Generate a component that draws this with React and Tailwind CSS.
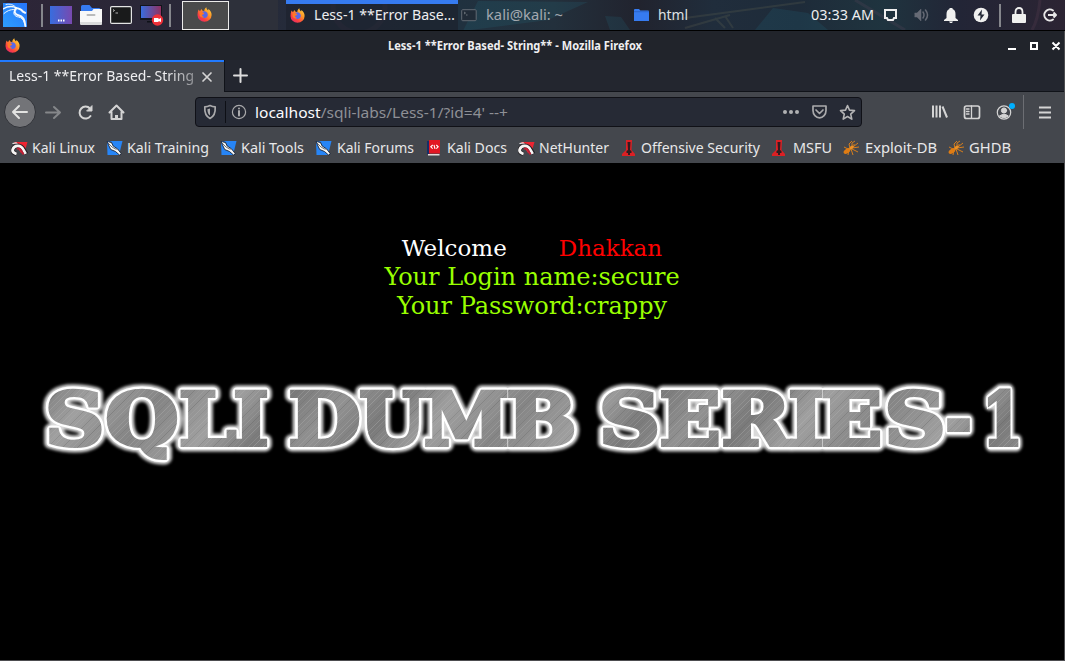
import React from "react";

const Sep = ({ className = "" }) => <div className={"w-[2px] h-[23px] bg-[#85868c] shrink-0 " + className} />;

function At({ w, children, className = "" }) {
  return <div className={"shrink-0 flex items-center whitespace-nowrap " + className} style={{ width: w }}>{children}</div>;
}

function Txt({ w, size = 15, y = 17, children, color = "#eeeef0", bold = false, host }) {
  return (
    <svg width={w} height="24" className="shrink-0 overflow-visible" fontFamily="'Noto Sans','Open Sans',sans-serif" fontSize={size} fontWeight={bold ? 700 : 400} fill={color}>
      <text x="0" y={y} textLength={w} lengthAdjust="spacingAndGlyphs">
        {host && <tspan fill="#fbfbfe">{host}</tspan>}{children}
      </text>
    </svg>
  );
}

const Firefox = () => (
  <svg width="15" height="15" viewBox="0 0 15 15" className="shrink-0">
    <defs>
      <linearGradient id="fx" x1="1" y1="0" x2="0.2" y2="1">
        <stop offset="0" stopColor="#ffe04a" /><stop offset=".4" stopColor="#ff9a26" /><stop offset=".75" stopColor="#fb4141" /><stop offset="1" stopColor="#e42a67" />
      </linearGradient>
    </defs>
    <path d="M1.5 2.5 3 4.2 4.3 2 5.6 3.8 7.3 3.9C7.2 2.5 8 1 9.4.2c-.1 1.4.7 2.2 1.7 3.2l.3-1.3C13.500 3.600 14.700 5.700 14.600 8a7 6.800 0 0 1-14.100 0C.5 6 .8 4.300 1.500 2.500Z" fill="url(#fx)" />
    <path d="M4.500 6.500c0-1.500 1.500-2.600 3.400-2.300C9.600 4.400 11 6 10.800 8c-.2 2-2 3.200-3.700 2.900-1.500-.2-2.600-1.500-2.700-3l2-.6.9-1Z" fill="#5868e8" />
    <path d="M2.500 5.600c1.500-1 3.100-.6 4.700.6-.7 1-1.500 1-2.300 1.400.1 1.500 1 2.200 2.500 2.500-1.300.9-3.800.5-4.800-1.300Z" fill="#ff7826" />
  </svg>
);

const KaliLogo = () => (
  <svg width="24" height="24" viewBox="0 0 24 24" className="shrink-0">
    <defs><linearGradient id="kl" x1="0" y1="1" x2="1" y2="0"><stop offset="0" stopColor="#2e9dff" /><stop offset="1" stopColor="#2675fb" /></linearGradient></defs>
    <path d="M0 0h24v24H0z" fill="url(#kl)" />
    <g fill="none" stroke="#f5faff" strokeLinecap="round">
      <path d="M0 6C5 3 9 2.500 13.500 5" strokeWidth="1.300" />
      <path d="M3 1.500c4-1 8 .2 10.500 3.500" strokeWidth=".9" />
      <path d="M1 10.500c4-3.500 8-4.500 12-3.700" strokeWidth="1" />
      <path d="M12.500 5c3 .2 5.600 1 7.200 3.500l2.500 1.300" strokeWidth="2" />
      <path d="M13 5.500c-2.500 2.600-1.300 6 2.300 6.700 4.500.8 6.700 4.200 7 10.800" strokeWidth="1.900" />
      <path d="M11.500 7.500c-2 3.500.5 6 4 6.500 3 .5 5 2.500 6 6" strokeWidth="1" />
    </g>
  </svg>
);

const Folder = ({ small }) => small ? (
  <svg width="15" height="12" viewBox="0 0 15 12"><path d="M0 1q0-1 1-1h4l1.300 1.500H14q1 0 1 1V12H0z" fill="#367bf0" /><path d="M0 2.700h15" stroke="#285db8" strokeWidth=".7" /></svg>
) : (
  <svg width="22" height="20" viewBox="0 0 22 20"><path d="M1 7V1.500Q1 0 2.500 0h7L12 3h7q1.500 0 1.500 1.500V9H1z" fill="#367bf0" /><path d="M0 6h12l1.500-2H22v14q0 2-1.500 2h-19Q0 20 0 18z" fill="#f8f8f8" /><path d="M0 17h22v1.500Q22 20 20.500 20h-19Q0 20 0 18z" fill="#dadbdc" /><rect x="6.500" y="9" width="9" height="2" rx="1" fill="#b9babb" /></svg>
);

const Desktop = ({ rec }) => (
  <svg width="24" height="22" viewBox="0 0 24 22">
    <defs><linearGradient id={rec ? "dg2" : "dg1"}><stop offset="0" stopColor="#386dde" /><stop offset="1" stopColor={rec ? "#92305f" : "#7849af"} /></linearGradient></defs>
    {rec ? <>
      <path d="M0 1h22v15H0z" fill="#12151c" /><path d="M1 2h20v12H1z" fill="url(#dg2)" /><path d="M7 17h8v1.500H7z" fill="#0e1118" />
      <circle cx="17.500" cy="16" r="5.700" fill="#ef3038" /><path d="M14 14h4.500v1.300l2.500-1.200v4l-2.500-1.200V18H14z" fill="#fff" />
    </> : <>
      <path d="M0 2h22v18H0z" fill="url(#dg1)" /><path d="M8 16.500h1.500M10.500 16.500H12M13 16.500h1.500" stroke="#fff" strokeWidth="2" />
    </>}
  </svg>
);

const Terminal = ({ small }) => small ? (
  <svg width="16" height="13" viewBox="0 0 16 13"><rect x=".7" y=".7" width="14.500" height="11" rx="1" fill="#202b37" stroke="#626a73" /><path d="m3 3 1.500 1L3 5M5 6h1.500" fill="none" stroke="#7e858b" strokeWidth=".8" /></svg>
) : (
  <svg width="22" height="18" viewBox="0 0 22 18"><rect x=".6" y=".6" width="20.800" height="16.800" rx="1.200" fill="#191a1b" stroke="#e3e4e4" strokeWidth="1.200" /><path d="m3 3.500 1.500 1L3 5.500M5.500 7H8" fill="none" stroke="#ddd" strokeWidth=".8" /></svg>
);

const Svg = ({ w = 16, h = w, children, color = "#d4d4d4", sw = 2 }) => (
  <svg width={w} height={h} viewBox={`0 0 ${w} ${h}`} fill="none" stroke={color} strokeWidth={sw} strokeLinecap="round" strokeLinejoin="round" className="shrink-0">{children}</svg>
);

function Panel() {
  return (
    <div className="h-[31px] relative flex items-center border-b border-black bg-[linear-gradient(90deg,#2d2537_0%,#292838_20%,#252b3a_27%,#20313f_43%,#23303c_52%,#21232e_60%,#202d3c_67%,#1e2b39_75%,#1f343f_83%,#222536_90%,#2c2433_100%)]">
      <div className="absolute inset-0 opacity-15 pointer-events-none">
        <svg width="1065" height="30" fill="none">
          <path d="M0 0h7L0 7z" fill="#3c8990" /><circle cx="359" cy="7" r="26" stroke="#964c75" strokeWidth="5" />
          <path d="m463 31 15-30 110 1-40 18zM605 16l16 1 9 13h-20zM755 30l18-22 35 5 20 17z" fill="#248096" />
          <path d="m685 28 45-13M715 18l10 10M725 16l8 12M670 20l135-18" stroke="#8f8961" strokeWidth="2" />
          <path d="m855 0 50 30M1040 0q-2 20-8 30" stroke="#80536d" strokeWidth="3" />
        </svg>
      </div>
      <div className="relative flex items-center h-[30px] w-full">
        <At w={41} className="pl-[3px]"><KaliLogo /></At>
        <At w={9}><Sep /></At>
        <At w={30}><Desktop /></At>
        <At w={30}><Folder /></At>
        <At w={30}><Terminal /></At>
        <At w={29}><Desktop rec /></At>
        <At w={13}><Sep /></At>
        <div className="w-[47px] h-[29px] mt-px shrink-0 border border-[#ecebea] bg-[#4a4a4b] flex items-center justify-center pr-[2px] pb-[2px]"><Firefox /></div>
        <div className="w-[49px] h-full bg-[#2d303a] shrink-0" />
        <div className="w-[180px] h-full pl-2 shrink-0">
          <div className="h-full border-t-4 border-[#367bf0] bg-[#1d222e]/70 flex items-center pl-1 pb-1"><At w={24}><Firefox /></At><Txt w={141}>Less-1 **Error Base…</Txt></div>
        </div>
        <At w={28} className="pl-[3px]"><Terminal small /></At>
        <At w={148}><Txt w={77} color="#a4a9b0">kali@kali: ~</Txt></At>
        <At w={24}><Folder small /></At>
        <At w={153}><Txt w={30} color="#dfe1e4">html</Txt></At>
        <At w={72}><Txt w={63}>03:33 AM</Txt></At>
        <At w={31}><Svg w={15} h={14}><path d="M2 2h11v8h-2l-1 2H5l-1-2H2z" strokeLinejoin="miter" stroke="#efefef" /></Svg></At>
        <At w={30}><Svg w={16} color="#666a75" sw={1.500}><path d="M1 6h2l4-4v12l-4-4H1z" fill="#666a75" strokeWidth=".5" /><path d="M9 5q2 3 0 6M11.500 3q4 5 0 10" /></Svg></At>
        <At w={29}><svg width="14" height="16" viewBox="0 0 14 16" fill="#f0f0ef"><path d="M5.500 2V1h3v1Q11.500 3 11.500 7v4L14 13v1H0v-1l2.500-2V7q0-4 3-5M5 14.500h4L8 16H6z" /></svg></At>
        <At w={26}><svg width="16" height="16"><circle cx="8" cy="8" r="7.300" fill="#f0f0ef" /><path d="M9 2.500 4.500 8.500h3L7 13.500l4.500-6h-3z" fill="#252a38" /></svg></At>
        <At w={13}><Sep /></At>
        <At w={30}><svg width="14" height="16"><path d="M1 7h12q1 0 1 1v7q0 1-1 1H1q-1 0-1-1V8q0-1 1-1" fill="#f0f0ef" /><path d="M3.500 7V5q0-4 3.500-4t3.500 4v2" fill="none" stroke="#f0f0ef" strokeWidth="1.800" /></svg></At>
        <Svg w={16}><path d="M11 3.500A5.500 5.500 0 1 0 11 12.500" stroke="#e8e8e8" /><path d="M6 8h8M11.500 5.500 14 8l-2.500 2.500" stroke="#e8e8e8" strokeLinecap="butt" /></Svg>
      </div>
    </div>
  );
}

const Dragon = ({ red }) => red ? (
  <svg width="17" height="16" viewBox="0 0 17 16">
    <path d="M3 2h13.500l-3.500 12-3-1z" fill="#ee2532" />
    <path d="M1.500 3.500 5 3l2 1.500" fill="none" stroke="#f4f4f4" strokeWidth="1.200" />
    <path d="M5.500 14Q.8 12.500 1.500 9.500 3 5.500 7 5.500q3.500.2 5.500 3.500l3 5" fill="none" stroke="#252226" strokeWidth="4.200" />
    <path d="M5.500 14Q.8 12.500 1.700 9.500 3 5.500 7 5.800q3.500.2 5.200 3.500l2.500 4.500" fill="none" stroke="#f7f5f4" strokeWidth="2.700" />
    <path d="M6 9q3-1.500 4 1l2.500 4.500" fill="none" stroke="#bc2036" strokeWidth="1.800" />
  </svg>
) : (
  <svg width="17" height="16" viewBox="0 0 17 16">
    <path d="M1 1h15.500l-3.500 14H1.500z" fill="#2785f6" />
    <path d="m1 1.500 4.500.8 1.700 3.700 4.500 3 3.800 5-2 1-4-3.500-4.800-2L2.500 5z" fill="#f8f7f3" stroke="#172337" strokeWidth=".9" />
    <path d="M1 2 6 7M3 1.500l3 1.700M6 7l4.500 2.500" stroke="#28364c" strokeWidth=".7" fill="none" />
  </svg>
);
const DocsIcon = () => <svg width="14" height="16"><path d="M0 1h3v13H0z" fill="#172d67" /><path d="M2 0h11v13.500H2z" fill="#e21623" /><path d="M1 14h11.500v1.500H1z" fill="#e2dada" /><path d="M5.700 5 3.800 6.800l1.900 1.800M9.300 5l1.900 1.800-1.900 1.800M7 5l1 3.800" fill="none" stroke="#fff" strokeWidth="1.100" /></svg>;
const Tower = () => <svg width="14" height="16" viewBox="0 0 14 16"><path d="M4 0h6l-.5 10 3.500 4v2H0v-2l4-4z" fill="#dc2024" /><path d="M5.500 2h3l-.5 8 1.500 1v2H8v2H6v-2H4.500v-2L6 10z" fill="#321c20" /></svg>;
const Bug = () => <svg width="17" height="16" viewBox="0 0 17 16"><g fill="none" stroke="#e68517" strokeWidth=".9"><path d="m7 8-1-4 3-3M9 8l0-5 3-2M10 7l5-4M9 8l7-1M9 9l6 3M8 9l2 6M6 9l-1 6M5 9l-4-2M11 6l0-2" /></g><ellipse cx="4" cy="11" rx="3.800" ry="2.200" transform="rotate(-35 4 11)" fill="#df7c13" /><ellipse cx="8.500" cy="7.500" rx="2.500" ry="1.600" transform="rotate(-35 8.500 7.500)" fill="#ed9125" /></svg>;

const bookmarks = [
  ["Kali Linux", 32, 63, <Dragon red />, 12], ["Kali Training", 127, 82, <Dragon />, 107],
  ["Kali Tools", 241, 63, <Dragon />, 221], ["Kali Forums", 337, 77, <Dragon />, 316],
  ["Kali Docs", 447, 60, <DocsIcon />, 428], ["NetHunter", 539, 70, <Dragon red />, 519],
  ["Offensive Security", 641, 119, <Tower />, 623], ["MSFU", 793, 39, <Tower />, 773],
  ["Exploit-DB", 865, 72, <Bug />, 844], ["GHDB", 969, 42, <Bug />, 949],
];

function Browser() {
  return (
    <>
      <div className="h-[29px] flex items-center bg-[#21242b] text-white">
        <At w={388} className="pl-[5px]"><Firefox /></At>
        <Txt w={254} size={12} y={15.500} bold>Less-1 **Error Based- String** - Mozilla Firefox</Txt>
        <div className="flex items-center pl-[366px]">
          <svg width="57" height="16" fill="none" stroke="#fff" strokeWidth="2"><path d="M0 11h8M23 5h6v6h-6zM44.500 4.500l7 7M51.500 4.500l-7 7" /></svg>
        </div>
      </div>
      <div className="h-[32px] flex bg-[#23262f]">
        <div className="w-[224px] h-full border-t-2 border-[#217aff] bg-[#44474d] flex items-center pl-[9px] shrink-0">
          <div className="w-[192px] [mask-image:linear-gradient(90deg,#000_82%,rgba(0,0,0,.4)_97%)]"><Txt w={185} y={16}>Less-1 **Error Based- String</Txt></div>
          <Svg w={12} sw={1.700}><path d="m2 2 8 8m0-8-8 8" /></Svg>
        </div>
        <div className="grow border-l border-b border-[#101319] flex items-center pl-[8px] pb-px"><Svg w={15} color="#ddd"><path d="M7.500 1v13M1 7.500h13" /></Svg></div>
      </div>
      <div className="h-[40px] bg-[#44474d] flex items-center">
        <At w={45} className="pl-[4px]"><div className="size-8 rounded-full bg-[#737478] border border-[#303238] flex items-center justify-center"><Svg w={18} color="#e3e3e2"><path d="M16 9H2m6-6L2 9l6 6" /></Svg></div></At>
        <At w={32}><Svg w={17} color="#85878a"><path d="M1 8.500h14M9 3l6 5.500-6 5.500" /></Svg></At>
        <At w={31}><Svg w={17}><path d="M13.500 12A6 6 0 1 1 13 4.500" /><path d="M10 7h5V2z" fill="#d4d4d4" strokeWidth="1" /></Svg></At>
        <At w={87}><Svg w={17}><path d="m1.500 8.500 7-7 7 7M3.500 8v7h10V8" /><path d="M8.500 15v-4" strokeWidth="3" strokeLinecap="butt" /></Svg></At>
        <div className="w-[667px] h-[30px] rounded-[4px] border border-[#101117] bg-[#262a35] flex items-center shrink-0">
          <At w={29} className="pl-[6px]"><Svg w={16} color="#aaaaac" sw={1.700}><path d="M8 1.500c2 1 3.500 1.300 5.200 1.300C13.600 9 12 12.500 8 14.500c-4-2-5.600-5.500-5.200-11.700C4.500 2.800 6 2.500 8 1.500Z" /><path d="M8 4.500v7c-1.800-1.200-2.500-3-2.600-6.300z" fill="#aaaaac" stroke="none" /></Svg></At>
          <div className="h-[22px] w-px bg-[#0d0f15]" />
          <At w={29} className="pl-[5px]"><Svg w={16} color="#aaaaac" sw={1.200}><circle cx="8" cy="8" r="6.600" /><path d="M8 7v4.500M8 4.500v.1" strokeWidth="2" /></Svg></At>
          <At w={528}><Txt w={253} y={18} color="#8e9096" host="localhost">/sqli-labs/Less-1/?id=4' --+</Txt></At>
          <At w={28}><svg width="17" height="6" fill="#b0b1b3"><circle cx="2" cy="3" r="2" /><circle cx="8" cy="3" r="2" /><circle cx="14" cy="3" r="2" /></svg></At>
          <At w={28}><Svg w={17} color="#aaaaac" sw={1.700}><path d="M2 2h13v4.500c0 4-3 7.300-6.500 7.300S2 10.500 2 6.500z" /><path d="m5 6 3.500 3.500L12 6" /></Svg></At>
          <Svg w={17} color="#b4b4b5" sw={1.600}><path d="m8.500 1.500 2 4.600 5 .5-3.800 3.500 1.100 5-4.300-2.600-4.300 2.600 1.100-5-3.800-3.500 5-.5z" /></Svg>
        </div>
        <At w={101} className="pl-[69px]"><Svg w={18}><path d="M2 2.500v12M5.500 2.500v12M9 2.500v12M11.500 3.500l4.500 11" strokeLinecap="butt" /></Svg></At>
        <At w={33}><Svg w={18} sw={1.700}><rect x="1.500" y="3" width="15" height="12.500" rx="2" /><path d="M8.500 3v12M3.500 6H6M3.500 8.500H6M3.500 11H6" strokeWidth="1.300" /></Svg></At>
        <At w={27} className="relative"><Svg w={17}><circle cx="8" cy="8.500" r="6.700" strokeWidth="1.200" /><circle cx="8" cy="6.500" r="2.600" fill="#d4d4d4" strokeWidth="1" /><path d="M3.700 12q4.300-3.500 8.600 0-4.300 3.500-8.600 0" fill="#d4d4d4" strokeWidth="1" /></Svg><div className="absolute left-[13px] -top-[1px] size-[6px] rounded-full bg-[#00b0ff]" /></At>
        <At w={15}><div className="h-[34px] w-px bg-[#6c6e73]" /></At>
        <Svg w={15}><path d="M1 2.500h12M1 7.500h12M1 12.500h12" strokeLinecap="butt" /></Svg>
      </div>
      <div className="h-[31px] bg-[#44474d] flex items-center pl-[11px]">
        {bookmarks.map(([label, x, w, icon, start], i) => {
          const end = bookmarks[i + 1] ? bookmarks[i + 1][4] : 1064;
          return <At key={label} w={end - start}><div className="shrink-0" style={{ width: x - start + 0.5 }}>{icon}</div><Txt w={w} color="#e8e8e9">{label}</Txt></At>;
        })}
      </div>
    </>
  );
}

// Each glyph: character, centre x and set width.
const words = [
  [["S", 74.7, 59], ["Q", 142, 73], ["L", 207.500, 57], ["I", 251, 35]],
  [["D", 324.500, 72], ["U", 392.500, 66], ["M", 466.500, 85], ["B", 541.500, 70]],
  [["S", 629.500, 61], ["E", 690, 61], ["R", 756, 69], ["I", 806, 35], ["E", 851.500, 61], ["S", 915, 61], ["-", 958.500, 26], ["1", 1002.500, 40]],
];

const Banner = () => (
  <svg width="1064" height="110" className="block" fontFamily="'DejaVu Serif',serif" fontWeight="700" fontSize="73">
    <defs>
      <linearGradient id="metal" gradientUnits="userSpaceOnUse" x1="0" y1="0" x2="110" y2="90" spreadMethod="reflect"><stop offset="0" stopColor="#929292" /><stop offset=".3" stopColor="#7a7a7a" /><stop offset=".6" stopColor="#a0a0a0" /><stop offset="1" stopColor="#858585" /></linearGradient>
      <pattern id="brush" width="1064" height="110" patternUnits="userSpaceOnUse">
        <path d="M0 0h1064v110H0z" fill="url(#metal)" />
        {Array.from({ length: 240 }, (_, i) => <path key={i} d={`M${i * 5 - 90} 110L${i * 5 + 20} 0`} stroke={i % 3 ? "#b5b5b5" : "#626262"} strokeWidth=".7" opacity={0.2 + (i * 7 % 5) * 0.08} />)}
      </pattern>
      <filter id="glow" x="-5%" y="-30%" width="110%" height="160%"><feGaussianBlur stdDeviation="1.700" /></filter>
    </defs>
    {[0, 1, 2, 3].map((layer) => (
      <g key={layer} aria-hidden={layer < 3} fill={layer === 3 ? "url(#brush)" : "#fff"} stroke={layer === 3 ? "url(#brush)" : "#fff"} strokeWidth={[13, 8.500, 6, 4][layer]} strokeLinejoin={layer > 1 ? "miter" : "round"} opacity={layer === 0 ? 0.85 : 1} filter={layer === 0 ? "url(#glow)" : undefined}>
        {words.map((glyphs, i) => (
          <text key={i} y="75">
            {glyphs.map(([ch, cx, w], j) => <tspan key={j} x={cx - w / 2} textLength={w} lengthAdjust="spacingAndGlyphs">{ch}</tspan>)}
          </text>
        ))}
      </g>
    ))}
  </svg>
);

export default function App() {
  return (
    <div className="w-[1065px] h-[661px] overflow-hidden bg-black flex flex-col font-['Noto_Sans',sans-serif]">
      <Panel />
      <div className="grow border-r border-b border-[#4d4d50] flex flex-col">
        <Browser />
        <div className="grow bg-black pt-[71px]">
          <div className="flex flex-col items-center font-['DejaVu_Serif',serif] text-[24px] leading-[29px] text-[#99ff00] whitespace-pre">
            <div className="text-[23px] flex gap-[52px]"><span className="text-white">Welcome</span><span className="text-[#ff0000]">Dhakkan</span></div>
            <div>Your Login name:secure</div>
            <div>Your Password:crappy</div>
          </div>
          <div className="pt-[49px]"><Banner /></div>
        </div>
      </div>
    </div>
  );
}
